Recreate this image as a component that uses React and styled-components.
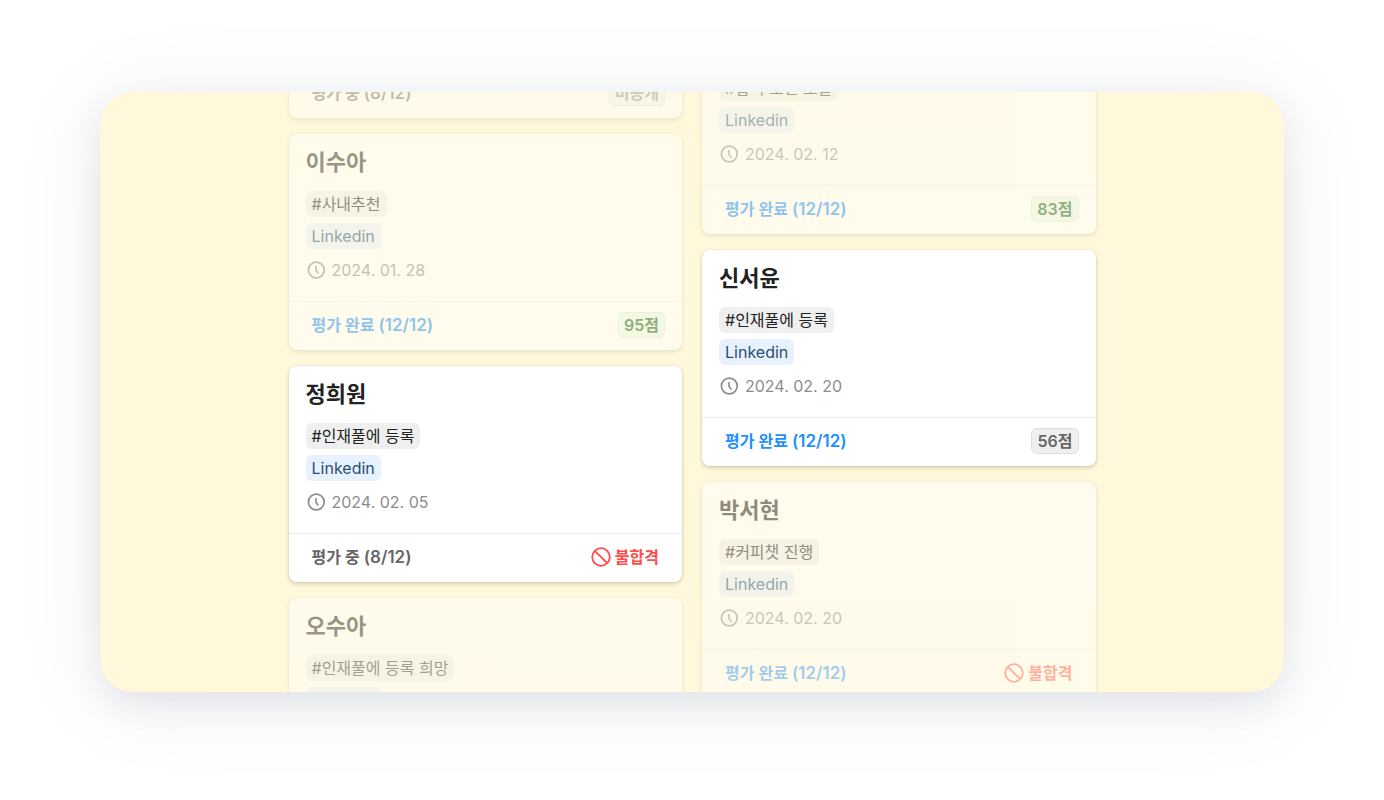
import React from 'react';
import styled, { createGlobalStyle } from 'styled-components';

/* cards that are partly scrolled away only carry the fields still in view */
const leftColumn = [
    { id: 1, done: 8, status: 'private', dim: true },
    { id: 2, name: '이수아', tag: '#사내추천', date: '2024. 01. 28', done: 12, status: 'score', score: 95, dim: true },
    { id: 3, name: '정희원', tag: '#인재풀에 등록', date: '2024. 02. 05', done: 8, status: 'fail' },
    { id: 4, name: '오수아', tag: '#인재풀에 등록 희망', dim: true },
];

const rightColumn = [
    { id: 5, tag: '#합격 보신 모달', date: '2024. 02. 12', done: 12, status: 'score', score: 83, dim: true },
    { id: 6, name: '신서윤', tag: '#인재풀에 등록', date: '2024. 02. 20', done: 12, status: 'score', score: 56 },
    { id: 7, name: '박서현', tag: '#커피챗 진행', date: '2024. 02. 20', done: 12, status: 'fail', dim: true },
];

function ClockIcon() {
    return (
        <svg width="20" height="20" viewBox="0 0 20 20" fill="none" stroke="currentColor" aria-hidden="true">
            <circle cx="10.3" cy="10" r="7.9" strokeWidth="1.7" />
            <path d="M10 6V10.6L12.4 13.4" strokeWidth="1.6" strokeLinejoin="round" />
        </svg>
    );
}

function BanIcon() {
    return (
        <svg width="20" height="20" viewBox="0 0 20 20" fill="none" stroke="currentColor" strokeWidth="1.8" aria-hidden="true">
            <circle cx="10" cy="10" r="8.8" />
            <path d="M3.8 3.8L16.2 16.2" />
        </svg>
    );
}

function Status({ status, score }) {
    if (status === 'fail') {
        return (
            <Fail>
                <BanIcon />
                불합격
            </Fail>
        );
    }
    if (status === 'private') {
        return <Badge $tone="muted">비공개</Badge>;
    }
    return <Badge $tone={score >= 80 ? 'good' : 'plain'}>{score}점</Badge>;
}

function Candidate({ name, tag, date, done, status, score, dim }) {
    return (
        <Card $dim={dim}>
            {tag && (
                <CardBody>
                    {name && <Name>{name}</Name>}
                    <Tags>
                        <Tag>{tag}</Tag>
                        {date ? <Tag $source>Linkedin</Tag> : <Tag $source $blank />}
                    </Tags>
                    {date && (
                        <DateRow>
                            <ClockIcon />
                            <time>{date}</time>
                        </DateRow>
                    )}
                </CardBody>
            )}
            {done && (
                <CardFooter>
                    <Progress $complete={done === 12}>
                        {done === 12 ? '평가 완료' : '평가 중'} <Count>({done}/12)</Count>
                    </Progress>
                    <Status status={status} score={score} />
                </CardFooter>
            )}
        </Card>
    );
}

export default function App() {
    return (
        <Page>
            <GlobalStyle />
            <Panel>
                <Board>
                    <Column $scrolled={23}>
                        {leftColumn.map(({ id, ...item }) => <Candidate key={id} {...item} />)}
                    </Column>
                    <Column $scrolled={30}>
                        {rightColumn.map(({ id, ...item }) => <Candidate key={id} {...item} />)}
                    </Column>
                </Board>
            </Panel>
        </Page>
    );
}

const GlobalStyle = createGlobalStyle`
    * {
        box-sizing: border-box;
    }
    body {
        margin: 0;
        background: #fff;
        font-family: Inter, "Noto Sans CJK KR", sans-serif;
        font-size: 16px;
        line-height: 24px;
        color: #222;
    }
`
const Page = styled.main`
    height: 100vh;
    padding: 92px 100px 108px;
    overflow: hidden;
`
const Panel = styled.section`
    position: relative;
    height: 100%;
    overflow: hidden;
    border-radius: 32px;
    background: #fff8db;
    box-shadow: 0 12px 32px rgb(30 50 75 / 9%), 0 8px 90px rgb(30 50 75 / 8%);
    /* fades the cards out towards both ends of the scroll area */
    &::after {
        content: '';
        position: absolute;
        inset: 0;
        pointer-events: none;
        opacity: 0.2;
        background: linear-gradient(
            rgb(255 248 219),
            rgb(255 248 219 / 0%) 20%,
            rgb(255 248 219 / 0%) 80%,
            rgb(255 248 219)
        );
    }
`
const Board = styled.div`
    display: grid;
    grid-template-columns: 1fr 1fr;
    gap: 20px;
    align-items: start;
    max-width: 807px;
    margin: 0 auto;
`
const Column = styled.div`
    display: grid;
    gap: 16px;
    margin-top: ${({ $scrolled }) => -$scrolled}px;
`
const Card = styled.article`
    border-radius: 8px;
    background: #fff;
    box-shadow: 0 2px 4px rgb(60 50 0 / 20%), 0 0 3px rgb(60 50 0 / 8%);
    opacity: ${({ $dim }) => ($dim ? 0.5 : 1)};
`
const CardBody = styled.div`
    padding: 13px 17px 19px;
`
const Name = styled.h2`
    margin: 0 0 14px;
    font-size: 22px;
    font-weight: 700;
    line-height: 30px;
`
const Tags = styled.div`
    display: flex;
    flex-direction: column;
    align-items: flex-start;
    gap: 6px;
    margin-bottom: 9px;
`
const Tag = styled.span`
    height: 26px;
    min-width: ${({ $blank }) => ($blank ? '76px' : '0')};
    padding: 0 6px;
    border-radius: 6px;
    line-height: 26px;
    background: ${({ $source }) => ($source ? '#e7f2fe' : '#efefef')};
    color: ${({ $source }) => ($source ? '#2c4f73' : '#222')};
`
const DateRow = styled.div`
    display: flex;
    align-items: center;
    gap: 6px;
    color: #8c8c8c;
`
const CardFooter = styled.footer`
    display: flex;
    align-items: center;
    justify-content: space-between;
    height: 49px;
    padding: 0 17px 2px;
    border-top: 1px solid #ececec;
    font-weight: 600;
`
const Progress = styled.span`
    padding: 0 6px;
    color: ${({ $complete }) => ($complete ? '#1f90ff' : '#666')};
`
const Count = styled.span`
    font-size: 17px;
`
const tones = {
    good: { background: '#e9f8e9', border: '#d6efd8', color: '#22662a' },
    plain: { background: '#efefef', border: '#dedede', color: '#666' },
    muted: { background: '#f3f3f3', border: '#e2e2e2', color: '#888' },
}
const Badge = styled.span`
    height: 26px;
    padding: 0 5px;
    border: 1px solid ${({ $tone }) => tones[$tone].border};
    border-radius: 6px;
    line-height: 24px;
    background: ${({ $tone }) => tones[$tone].background};
    color: ${({ $tone }) => tones[$tone].color};
`
const Fail = styled.span`
    display: flex;
    align-items: center;
    gap: 4px;
    padding: 0 6px;
    color: #ff4b4b;
`
